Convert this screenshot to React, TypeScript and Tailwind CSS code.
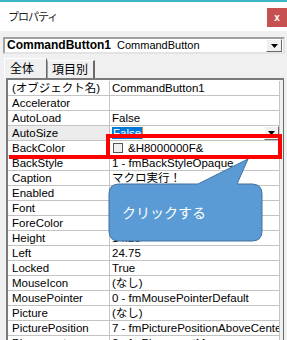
import React from "react";

const rows: [string, string][] = [
  ["(オブジェクト名)", "CommandButton1"],
  ["Accelerator", ""],
  ["AutoLoad", "False"],
  ["AutoSize", "False"],
  ["BackColor", "&H8000000F&"],
  ["BackStyle", "1 - fmBackStyleOpaque"],
  ["Caption", "マクロ実行！"],
  ["Enabled", "True"],
  ["Font", "MS UI Gothic"],
  ["ForeColor", "&H80000012&"],
  ["Height", "14.25"],
  ["Left", "24.75"],
  ["Locked", "True"],
  ["MouseIcon", "(なし)"],
  ["MousePointer", "0 - fmMousePointerDefault"],
  ["Picture", "(なし)"],
  ["PicturePosition", "7 - fmPicturePositionAboveCenter"],
  ["Placement", "2 - fmPlacementMove"],
];

function DropButton({ className }: { className: string }) {
  return (
    <div
      className={
        "flex items-center justify-center bg-[#f0f0f0] border border-t-white border-l-white border-r-[#696969] border-b-[#696969] " +
        className
      }
    >
      <svg width="7" height="4" viewBox="0 0 7 4">
        <path d="M0 0 L7 0 L3.5 4 Z" fill="#000" />
      </svg>
    </div>
  );
}

export default function App() {
  return (
    <div
      className="relative w-[287px] h-[340px] overflow-hidden bg-[#f0f0f0] text-black"
      style={{ fontFamily: '"Liberation Sans", "Noto Sans CJK JP", sans-serif' }}
    >
      {/* top accent */}
      <div className="h-[2px] bg-[#3fb6c6]" />
      {/* title bar */}
      <div className="h-[29px] bg-white flex justify-between">
        <div
          className="pl-[8px] pt-[7px] text-[11px] leading-[14px] tracking-[-1px] text-[#222]"
          style={{ fontFamily: '"Noto Sans CJK JP", sans-serif' }}
        >
          プロパティ
        </div>
        <div className="mt-[6px] w-[20px] h-[19px] bg-[#c75050] flex items-center justify-center text-white text-[10px] font-bold leading-none">
          x
        </div>
      </div>
      {/* combo */}
      <div className="pt-[6px] pl-[3px]">
        <div className="w-[282px] h-[17px] bg-white border-2 border-t-[#a0a0a0] border-l-[#a0a0a0] border-r-[#e3e3e3] border-b-[#e3e3e3] flex items-center">
          <div className="flex-1 flex items-center pl-[2px] whitespace-nowrap">
            <span className="text-[12px] font-bold leading-[13px]">CommandButton1</span>
            <span className="text-[11px] leading-[13px] ml-[6px]">CommandButton</span>
          </div>
          <DropButton className="w-[16px] h-[13px] mr-px" />
        </div>
      </div>
      {/* tabs */}
      <div className="mt-[4px] h-[20px] pl-[4px] flex items-end">
        <div
          className="w-[43px] h-[20px] border-l border-t border-white border-r border-r-[#696969] flex items-start pl-[5px] pt-[1px] text-[12px] leading-[15px]"
          style={{ fontFamily: '"Noto Sans CJK JP", sans-serif' }}
        >
          全体
        </div>
        <div
          className="w-[48px] h-[18px] border-t border-t-white border-l border-l-[#a0a0a0] border-r-2 border-r-[#696969] flex items-start pl-[4px] text-[12px] leading-[15px]"
          style={{ fontFamily: '"Noto Sans CJK JP", sans-serif' }}
        >
          項目別
        </div>
      </div>
      {/* grid */}
      <div className="ml-[6px] w-[278px] border-t-2 border-l-2 border-[#7a7a7a] border-r border-r-[#696969]">
        <div className="w-[272px] bg-white pt-[1px]">
          {rows.map(([label, value], i) => {
            const isSel = label === "AutoSize";
            const isColor = label === "BackColor";
            return (
              <div
                key={i}
                className="flex h-[15px] border-b border-r border-[#c4c4c4] text-[11.5px] leading-[14px] whitespace-nowrap"
              >
                <div
                  className={
                    "w-[102px] border-r border-[#c4c4c4] pl-[4px] overflow-hidden " +
                    (isSel ? "bg-[#ececec]" : "bg-white")
                  }
                >
                  {label}
                </div>
                <div className="flex-1 pl-[2px] overflow-hidden flex items-center">
                  {isSel ? (
                    <div className="flex-1 flex items-center justify-between">
                      <span className="bg-[#0078d7] text-white px-[1px] leading-[12px] border-r border-r-[#f08030]">
                        {value}
                      </span>
                      <DropButton className="w-[15px] h-[14px]" />
                    </div>
                  ) : isColor ? (
                    <div className="flex items-center">
                      <span className="inline-block w-[10px] h-[10px] border border-[#555] bg-[#f0f0f0] ml-px mr-[5px]" />
                      <span>{value}</span>
                    </div>
                  ) : (
                    <span>{value}</span>
                  )}
                </div>
              </div>
            );
          })}
        </div>
      </div>

      {/* red highlight */}
      <div className="absolute left-[106px] top-[134px] w-[176px] h-[25px] border-4 border-[#ff0000]" />
      <div className="absolute left-[9px] top-[155px] w-[100px] h-[4px] bg-[#ff0000]" />

      {/* callout */}
      <svg
        className="absolute left-[108px] top-[157px]"
        width="156"
        height="86"
        viewBox="0 0 156 86"
      >
        <path
          d="M11 27 L90 27 L140 2 L129 27 L144 27 Q154 27 154 37 L154 74 Q154 84 144 84 L11 84 Q1 84 1 74 L1 37 Q1 27 11 27 Z"
          fill="#5b9bd5"
          stroke="#41719c"
          strokeWidth="1"
        />
      </svg>
      <div
        className="absolute left-[122px] top-[203px] text-white text-[14px] leading-[18px]"
        style={{ fontFamily: '"Noto Sans CJK JP", sans-serif' }}
      >
        クリックする
      </div>
    </div>
  );
}
